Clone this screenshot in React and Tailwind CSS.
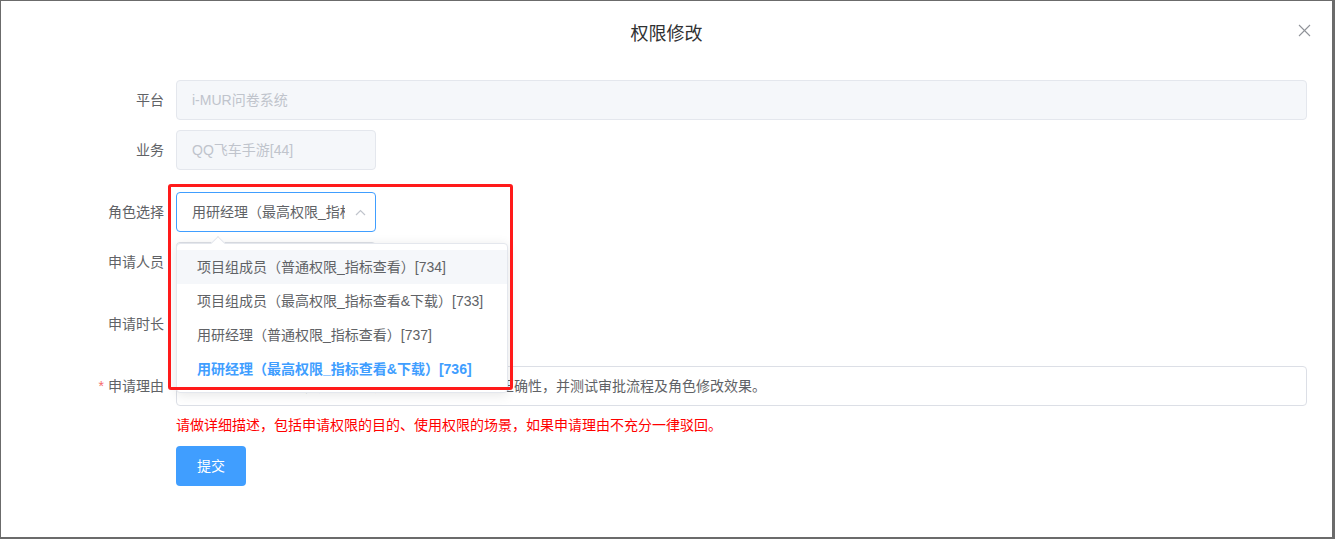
import React from 'react';

const roles = [
  { name: '项目组成员（普通权限_指标查看）[734]', hover: true },
  { name: '项目组成员（最高权限_指标查看&下载）[733]' },
  { name: '用研经理（普通权限_指标查看）[737]' },
  { name: '用研经理（最高权限_指标查看&下载）[736]', selected: true },
];

const Label = ({ children, required }) => (
  <div className="w-[155px] shrink-0 pr-3 text-right text-[14px] leading-[40px] text-[#606266]">
    {required && <span className="mr-1 text-[#f56c6c]">*</span>}
    {children}
  </div>
);

const App = () => {
  return (
    <div className="relative h-[539px] w-[1335px] overflow-hidden bg-[#6b6b6b] pl-[1px] pt-[1px] font-['Liberation_Sans','Noto_Sans_CJK_SC',sans-serif]">
      <div className="relative h-[536px] w-[1331px] bg-white">
        {/* 标题 */}
        <div className="flex h-[54px] justify-center pt-[21px]">
          <span className="text-[18px] leading-[24px] text-[#303133]">权限修改</span>
        </div>
        <button className="absolute right-[21px] top-[22px] flex h-[14px] w-[14px] items-center justify-center">
          <svg width="13" height="13" viewBox="0 0 13 13" fill="none" stroke="#909399" strokeWidth="1.1">
            <line x1="1" y1="1" x2="12" y2="12" />
            <line x1="12" y1="1" x2="1" y2="12" />
          </svg>
        </button>

        {/* 表单 */}
        <div className="pl-[20px] pr-[25px] pt-[25px] text-[14px]">
          <div className="mb-[10px] flex">
            <Label>平台</Label>
            <div className="h-[40px] flex-1 rounded border border-[#e4e7ed] bg-[#f5f7fa] px-[15px] leading-[38px] text-[#c0c4cc]">
              i-MUR问卷系统
            </div>
          </div>

          <div className="mb-[22px] flex">
            <Label>业务</Label>
            <div className="h-[40px] w-[200px] rounded border border-[#e4e7ed] bg-[#f5f7fa] px-[15px] leading-[38px] text-[#c0c4cc]">
              QQ飞车手游[44]
            </div>
          </div>

          <div className="mb-[10px] flex">
            <Label>角色选择</Label>
            <div className="relative z-10">
              <div className="flex h-[40px] w-[200px] rounded border border-[#409eff] bg-white pl-[15px] leading-[38px] text-[#606266]">
                <div className="flex-1 overflow-hidden whitespace-nowrap">用研经理（最高权限_指标查看&下载）[736]</div>
                <div className="flex w-[30px] items-center justify-center">
                  <svg width="11" height="7" viewBox="0 0 11 7" fill="none" stroke="#c0c4cc" strokeWidth="1.2">
                    <polyline points="1,6 5.5,1.5 10,6" />
                  </svg>
                </div>
              </div>

              {/* 下拉菜单 */}
              <div className="absolute left-0 top-[51px] w-[332px] rounded border border-[#e4e7ed] bg-white py-[6px] shadow-[0_2px_12px_0_rgba(0,0,0,0.1)]">
                <div className="absolute left-[36px] top-[-6px] h-[10px] w-[10px] rotate-45 border-l border-t border-[#e4e7ed] bg-white" />
                {roles.map((r) => (
                  <div
                    key={r.name}
                    className={`relative h-[34px] whitespace-nowrap px-[20px] leading-[34px] ${
                      r.hover ? 'bg-[#f5f7fa]' : ''
                    } ${r.selected ? 'font-bold text-[#409eff]' : 'text-[#606266]'}`}
                  >
                    {r.name}
                  </div>
                ))}
              </div>
            </div>
          </div>

          <div className="mb-[22px] flex">
            <Label>申请人员</Label>
            <div className="h-[40px] w-[200px] rounded border border-[#dcdfe6] bg-white" />
          </div>

          <div className="mb-[22px] flex">
            <Label>申请时长</Label>
            <div className="h-[40px] w-[200px] rounded border border-[#dcdfe6] bg-white" />
          </div>

          <div className="flex">
            <Label required>申请理由</Label>
            <div className="flex-1">
              <div className="h-[40px] overflow-hidden whitespace-nowrap rounded border border-[#dcdfe6] bg-white px-[15px] leading-[38px] text-[#606266]">
                此为测试账号申请，用于验证角色权限修改功能的正确性，并测试审批流程及角色修改效果。
              </div>
              <div className="mt-[9px] text-[14px] leading-[20px] text-[#ff0000]">
                请做详细描述，包括申请权限的目的、使用权限的场景，如果申请理由不充分一律驳回。
              </div>
              <button className="mt-[11px] h-[40px] w-[70px] rounded bg-[#409eff] text-[14px] text-white">提交</button>
            </div>
          </div>
        </div>
      </div>

      {/* 标注红框 */}
      <div className="absolute left-[168px] top-[184px] z-20 h-[206px] w-[345px] rounded-[3px] border-[3px] border-[#ff1a1a]" />
    </div>
  );
};

export default App;
